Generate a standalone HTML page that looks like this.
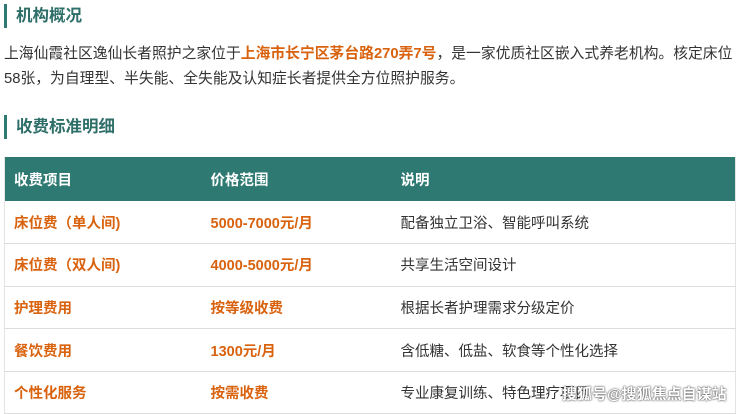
<!DOCTYPE html>
<html><head><meta charset="utf-8"><style>
*{margin:0;padding:0;box-sizing:border-box}
body{width:740px;height:414px;overflow:hidden;background:#fff;font-family:"Liberation Sans","Noto Sans CJK SC",sans-serif;color:#333;position:relative}
.h{position:absolute;left:4px;border-left:3px solid #2e7a72;padding-left:9px;font-size:16.5px;font-weight:bold;color:#2e6e68;height:24px;line-height:24px}
.p{position:absolute;left:4px;font-size:14.8px;line-height:25px;white-space:nowrap;color:#333}
.o{color:#d9620e;font-weight:bold}
table{position:absolute;left:4px;top:157px;width:732px;border-collapse:collapse;font-size:14.5px;border-left:1px solid #e4e4e4;border-right:1px solid #e4e4e4}
th{background:#2e7a72;color:#fff;text-align:left;height:44px;font-weight:bold;padding-left:9px}
td{height:42.6px;padding-left:9px;border-bottom:1px solid #ddd;white-space:nowrap}
td.a,td.b{color:#d9620e;font-weight:bold}
.w{position:absolute;left:562px;top:383px;font-size:15px;font-weight:bold;color:#fff;text-shadow:0 0 2px #555,0 0 1px #333;white-space:nowrap}
</style></head><body>
<div class="h" style="top:4px">机构概况</div>
<div class="p" style="top:42px">上海仙霞社区逸仙长者照护之家位于<span class="o">上海市长宁区茅台路270弄7号</span>，是一家优质社区嵌入式养老机构。核定床位</div>
<div class="p" style="top:67px">58张，为自理型、半失能、全失能及认知症长者提供全方位照护服务。</div>
<div class="h" style="top:115px">收费标准明细</div>
<table>
<tr><th style="width:197px">收费项目</th><th style="width:190px">价格范围</th><th>说明</th></tr>
<tr><td class="a">床位费（单人间)</td><td class="b">5000-7000元/月</td><td>配备独立卫浴、智能呼叫系统</td></tr>
<tr><td class="a">床位费（双人间)</td><td class="b">4000-5000元/月</td><td>共享生活空间设计</td></tr>
<tr><td class="a">护理费用</td><td class="b">按等级收费</td><td>根据长者护理需求分级定价</td></tr>
<tr><td class="a">餐饮费用</td><td class="b">1300元/月</td><td>含低糖、低盐、软食等个性化选择</td></tr>
<tr><td class="a">个性化服务</td><td class="b">按需收费</td><td>专业康复训练、特色理疗项目</td></tr>
</table>
<div class="w">搜狐号@搜狐焦点自谋站</div>
</body></html>
